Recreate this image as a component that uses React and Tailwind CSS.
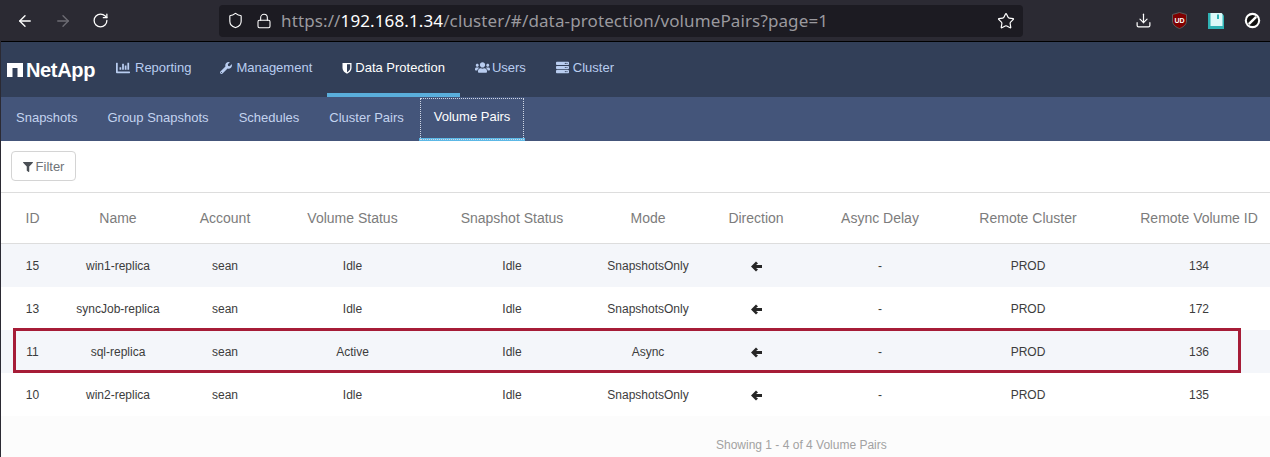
import { ArrowLeft, ArrowRight, RotateCw, Shield, Lock, Star, Download } from 'lucide-react';
import { FaChartBar, FaWrench, FaUsers, FaServer, FaFilter } from 'react-icons/fa';

const navItems = [
    { label: 'Reporting', icon: <FaChartBar size={14} />, spacing: 'gap-[5px] pl-[15px] pr-[14px]' },
    { label: 'Management', icon: <FaWrench size={12} />, spacing: 'gap-[4px] px-[15px]' },
    { label: 'Data Protection', icon: <HalfShield />, spacing: 'gap-[3px] px-[15px]', active: true },
    { label: 'Users', icon: <FaUsers size={15} />, spacing: 'gap-[2px] px-[15px]' },
    { label: 'Cluster', icon: <FaServer size={13} />, spacing: 'gap-[4px] px-[15px]' },
];

const subItems = ['Snapshots', 'Group Snapshots', 'Schedules', 'Cluster Pairs', 'Volume Pairs'];

const columns = ['ID', 'Name', 'Account', 'Volume Status', 'Snapshot Status', 'Mode', 'Direction', 'Async Delay', 'Remote Cluster', 'Remote Volume ID'];

const rows = [
    ['15', 'win1-replica', 'sean', 'Idle', 'Idle', 'SnapshotsOnly', '-', 'PROD', '134'],
    ['13', 'syncJob-replica', 'sean', 'Idle', 'Idle', 'SnapshotsOnly', '-', 'PROD', '172'],
    ['11', 'sql-replica', 'sean', 'Active', 'Idle', 'Async', '-', 'PROD', '136'],
    ['10', 'win2-replica', 'sean', 'Idle', 'Idle', 'SnapshotsOnly', '-', 'PROD', '135'],
];

const gridCols = 'grid grid-cols-[63px_108px_106px_149px_170px_102px_114px_134px_162px_180px] w-[1288px]';

function HalfShield() {
    return (
        <svg width="10" height="12" viewBox="0 0 10 12">
            <path d="M0.5 1 H9.5 V6 C9.5 9 7 10.8 5 11.7 C3 10.8 0.5 9 0.5 6 Z" fill="#fff" />
            <path d="M5 2.3 H8.2 V6 C8.2 8 6.4 9.4 5 10.2 Z" fill="#323f58" />
        </svg>
    );
}

function NetAppMark() {
    return (
        <svg width="16" height="14" viewBox="0 0 16 14">
            <path d="M0 0 H16 V14 H10.5 V5 H5.5 V14 H0 Z" fill="#fff" />
        </svg>
    );
}

function UblockIcon() {
    return (
        <div className="relative w-[15px] h-[17px]">
            <svg width="15" height="17" viewBox="0 0 15 17" className="absolute inset-0">
                <path d="M7.5 0.5 L14.5 2.5 V9 C14.5 13 10.5 15.5 7.5 16.5 C4.5 15.5 0.5 13 0.5 9 V2.5 Z" fill="#800000" stroke="#5c5c5c" />
            </svg>
            <span className="absolute inset-0 flex items-center justify-center text-[7px] font-bold text-white leading-none font-['Liberation_Sans',sans-serif]">UD</span>
        </div>
    );
}

function SaveIcon() {
    return (
        <svg width="16" height="16" viewBox="0 0 16 16">
            <path d="M0 0 H13.5 L16 2.5 V16 H0 Z" fill="#2fb2b5" />
            <path d="M2.5 0 H13.5 L14.5 1 V13 H2.5 Z" fill="#dcf9f9" />
            <rect x="9" y="1.5" width="2" height="4.5" fill="#2fb2b5" />
        </svg>
    );
}

function BlockIcon() {
    return (
        <svg width="17" height="17" viewBox="0 0 17 17">
            <circle cx="8.5" cy="8.5" r="7.7" fill="#fff" />
            <circle cx="8.5" cy="8.5" r="5.6" fill="#111" />
            <path d="M4.8 12.2 L12.2 4.8" stroke="#fff" strokeWidth="2.4" />
        </svg>
    );
}

function DirectionArrow() {
    return (
        <svg width="11" height="11" viewBox="0 0 11 11" className="mt-px">
            <path d="M0 5.5 L5 0.5 L7 2.5 L5 4 H11 V7 H5 L7 8.5 L5 10.5 Z" fill="#262626" />
        </svg>
    );
}

function BrowserBar() {
    return (
        <div className="h-[42px] bg-[#2b2a33] border-b border-black flex items-center shrink-0 font-['Noto_Sans',sans-serif]">
            <div className="flex items-center gap-[20px] pl-[15px] text-white w-[218px]">
                <ArrowLeft size={18} strokeWidth={1.8} />
                <ArrowRight size={18} strokeWidth={1.8} className="text-[#6d6c74]" />
                <RotateCw size={17} strokeWidth={1.8} />
            </div>
            <div className="w-[804px] h-[32px] bg-[#1c1b22] rounded-[4px] flex items-center pl-[8px] pr-[8px] text-white">
                <Shield size={17} strokeWidth={1.6} />
                <Lock size={16} strokeWidth={1.6} className="ml-[12px]" />
                <div className="ml-[9px] flex-1 text-[17px] tracking-[0.12px] leading-none whitespace-nowrap text-[#9a999e]">
                    https://<span className="text-white">192.168.1.34</span>/cluster/#/data-protection/volumePairs?page=1
                </div>
                <Star size={18} strokeWidth={1.6} />
            </div>
            <div className="flex items-center pl-[112px] text-white">
                <Download size={17} strokeWidth={1.7} />
                <div className="ml-[20px]"><UblockIcon /></div>
                <div className="ml-[21px]"><SaveIcon /></div>
                <div className="ml-[20px]"><BlockIcon /></div>
            </div>
        </div>
    );
}

function MainNav() {
    return (
        <div className="h-[55px] bg-[#323f58] flex shrink-0">
            <div className="w-[100px] pl-[6px] flex items-center gap-[3px]">
                <NetAppMark />
                <span className="text-[20px] font-bold text-white tracking-[-0.35px]">NetApp</span>
            </div>
            {navItems.map((item) => (
                <div
                    key={item.label}
                    className={`h-[55px] flex items-center ${item.spacing} text-[13px] border-b-4 ${item.active ? 'border-[#5aaedb] text-white' : 'border-transparent text-[#b9cdf0]'}`}
                >
                    {item.icon}
                    <span>{item.label}</span>
                </div>
            ))}
        </div>
    );
}

function SubNav() {
    return (
        <div className="h-[44px] bg-[#44557a] flex shrink-0">
            {subItems.map((label) => {
                const active = label === 'Volume Pairs';
                return (
                    <div
                        key={label}
                        className={`px-[15px] h-[44px] flex items-center text-[13px] ${active ? 'text-white border-b-[3px] border-[#5cb8e6] outline-1 outline-dotted outline-[#cfd6e4] -outline-offset-2 pb-px' : 'text-[#c3d3ef] pb-[2px]'}`}
                    >
                        {label}
                    </div>
                );
            })}
        </div>
    );
}

function PairsTable() {
    return (
        <div className="relative flex-1 bg-white">
            <div className="h-[51px] px-[10px] pt-[10px]">
                <div className="w-[65px] h-[30px] border border-[#d4d4d4] rounded-[4px] flex items-center justify-center gap-[3px] text-[13px] text-[#6f7378]">
                    <FaFilter size={10} className="text-[#4a4f55] mt-px" />
                    <span className="pt-[2px]">Filter</span>
                </div>
            </div>
            <div className={`${gridCols} h-[52px] border-y border-[#dddddd] items-center text-center text-[14px] text-[#7c7c7c]`}>
                {columns.map((col) => (
                    <div key={col}>{col}</div>
                ))}
            </div>
            {rows.map((row, i) => (
                <div
                    key={row[0]}
                    className={`${gridCols} h-[43px] items-center text-center text-[12px] text-[#3c3c3c] ${i % 2 === 0 ? 'bg-[#f4f6fa]' : 'bg-white'}`}
                >
                    {row.slice(0, 6).map((cell, j) => (
                        <div key={j}>{cell}</div>
                    ))}
                    <div className="flex justify-center">
                        <DirectionArrow />
                    </div>
                    {row.slice(6).map((cell, j) => (
                        <div key={j}>{cell}</div>
                    ))}
                </div>
            ))}
            <div className="h-[41px] bg-[#fcfcfc] pl-[715px] pt-[21px] text-[12px] leading-[16px] text-[#a2a2a2]">
                Showing 1 - 4 of 4 Volume Pairs
            </div>
            {/* red box drawn over the sql-replica row */}
            <div className="absolute left-[12px] top-[187px] w-[1228px] h-[45px] border-[3px] border-[#a61c37] pointer-events-none"></div>
        </div>
    );
}

export default function App() {
    return (
        <div className="w-[1270px] h-[457px] overflow-hidden flex flex-col bg-white border-l border-[#2b2a33] font-['Liberation_Sans',sans-serif]">
            <BrowserBar />
            <MainNav />
            <SubNav />
            <PairsTable />
        </div>
    );
}
